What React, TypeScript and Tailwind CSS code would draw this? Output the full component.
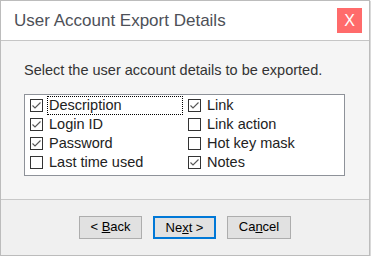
import { useState } from "react";

type Item = { label: string; checked: boolean };

const left: Item[] = [
  { label: "Description", checked: true },
  { label: "Login ID", checked: true },
  { label: "Password", checked: true },
  { label: "Last time used", checked: false },
];

const right: Item[] = [
  { label: "Link", checked: true },
  { label: "Link action", checked: false },
  { label: "Hot key mask", checked: false },
  { label: "Notes", checked: true },
];

function Box({ checked }: { checked: boolean }) {
  return (
    <span className="w-[13px] h-[13px] border border-[#333] bg-white flex items-center justify-center shrink-0">
      {checked && (
        <svg width="11" height="11" viewBox="0 0 11 11">
          <path d="M1.5 5.5 L4 8 L9.5 2.5" fill="none" stroke="#555" strokeWidth="1.1" />
        </svg>
      )}
    </span>
  );
}

function Row({ item, focused }: { item: Item; focused?: boolean }) {
  return (
    <div className="h-[19px] flex items-center gap-[5px]">
      <Box checked={item.checked} />
      <span
        className={`h-[19px] flex items-center pl-[1px] text-[14.5px] text-[#222] ${
          focused ? "border border-dotted border-black w-[136px] -ml-[1px]" : ""
        }`}
      >
        {item.label}
      </span>
    </div>
  );
}

export default function App() {
  const [items] = useState({ left, right });

  return (
    <div
      className="w-[370px] h-[256px] border border-[#bcbcbc] flex flex-col shadow-[1px_1px_1px_rgba(0,0,0,0.15)]"
      style={{ fontFamily: '"Liberation Sans", Arial, sans-serif' }}
    >
      {/* Title bar */}
      <div className="h-[40px] bg-white border-b border-[#c6c6c6] flex items-center justify-between pl-[13px] pr-[7px] shrink-0">
        <span className="text-[17px] text-[#4d5058]">User Account Export Details</span>
        <button className="w-[25px] h-[25px] bg-[#ff6b6b] text-white text-[16px] flex items-center justify-center">
          X
        </button>
      </div>

      {/* Content */}
      <div className="flex-1 bg-[#f5f5f5] pl-[23px] pt-[21px]">
        <p className="text-[14.5px] text-[#333] leading-[16px]">
          Select the user account details to be exported.
        </p>
        <div className="mt-[16px] w-[321px] h-[82px] border border-[#8e9299] bg-white flex pl-[5px] pt-[1px]">
          <div className="w-[158px] flex flex-col">
            {items.left.map((it, i) => (
              <Row key={it.label} item={it} focused={i === 0} />
            ))}
          </div>
          <div className="flex flex-col">
            {items.right.map((it) => (
              <Row key={it.label} item={it} />
            ))}
          </div>
        </div>
      </div>

      {/* Footer */}
      <div className="h-[56px] bg-[#f0f0f0] border-t border-[#c8c8c8] flex items-center justify-center gap-[11px] shrink-0 pb-[1px]">
        <button className="w-[63px] h-[23px] border border-[#adadad] bg-[#e1e1e1] text-[13px] text-black">
          &lt; <u>B</u>ack
        </button>
        <button className="w-[63px] h-[23px] border-2 border-[#0078d7] bg-[#e1e1e1] text-[13px] text-black">
          Ne<u>x</u>t &gt;
        </button>
        <button className="w-[64px] h-[23px] border border-[#adadad] bg-[#e1e1e1] text-[13px] text-black">
          Ca<u>n</u>cel
        </button>
      </div>
    </div>
  );
}
